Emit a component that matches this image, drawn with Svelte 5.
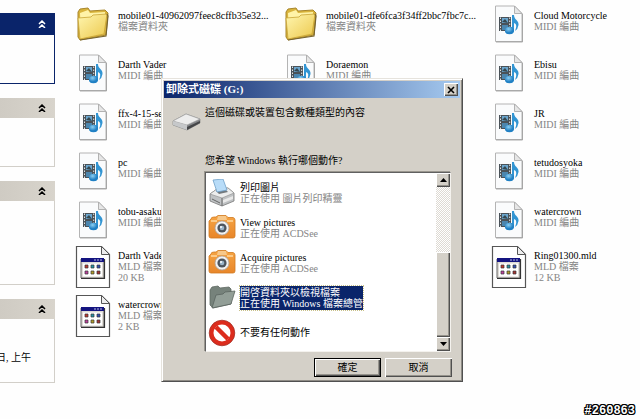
<script>
  const midi = (name) => ({ name, kind: 'midi', lines: ['MIDI 編曲'] });
  const mld = (name, size) => ({ name, kind: 'mld', lines: ['MLD 檔案', size] });
  const folder = (name) => ({ name, kind: 'folder', lines: ['檔案資料夾'] });

  const columns = [
    [
      folder('mobile01-40962097feec8cffb35e32...'),
      midi('Darth Vader'),
      midi('ffx-4-15-se'),
      midi('pc'),
      midi('tobu-asaku'),
      mld('Darth Vade', '20 KB'),
      mld('watercrown', '2 KB'),
    ],
    [folder('mobile01-dfe6fca3f34ff2bbc7fbc7c...'), midi('Doraemon')],
    [
      midi('Cloud Motorcycle'),
      midi('Ebisu'),
      midi('JR'),
      midi('tetudosyoka'),
      midi('watercrown'),
      mld('Ring01300.mld', '12 KB'),
    ],
  ];

  const panels = [
    { size: 'short', active: true, note: '' },
    { size: 'short', active: false, note: '' },
    { size: 'tall', active: false, note: '' },
    { size: 'mid', active: false, note: '日, 上午' },
  ];

  const actions = [
    { icon: 'printer', title: '列印圖片', via: '正在使用 圖片列印精靈' },
    { icon: 'camera', title: 'View pictures', via: '正在使用 ACDSee' },
    { icon: 'camera', title: 'Acquire pictures', via: '正在使用 ACDSee' },
    { icon: 'open', title: '開啓資料夾以檢視檔案', via: '正在使用 Windows 檔案總管' },
    { icon: 'none', title: '不要有任何動作', via: '' },
  ];

  let selected = $state(3);
</script>

{#snippet fileIcon(kind)}
  {#if kind === 'folder'}
    <svg width="34" height="34" viewBox="0 0 34 34">
      <path d="M2 5 L4 2 L12 1 L14 4 L29 3 L32 6 L30 28 L4 33 L2 30Z" fill="#d9b43c" stroke="#a8862c" />
      <path d="M4 6 L12 3 L14 6 L29 5 L28 27 L5 31Z" fill="#fff3a8" />
      <path d="M2 11 L15 10 L17 8 L31 7 L28 27 L4 32Z" fill="url(#gFolder)" stroke="#c9a436" stroke-width=".8" />
      <path d="M31 7 L32 9 L30 29 L4 33" fill="none" stroke="#77642f" stroke-width="1.2" />
    </svg>
  {:else if kind === 'midi'}
    <svg width="30" height="38" viewBox="0 0 30 38">
      <path d="M1.500 1 H20.500 L28 8.500 V36.500 H1.500Z" fill="#fafbfc" stroke="#b4b4b4" />
      <path d="M28.500 9 V37 H2" fill="none" stroke="#999" stroke-width=".8" />
      <path d="M20.500 1 V8.500 H28Z" fill="#e6e6e6" stroke="#aaa" stroke-width=".9" />
      <path d="M5 12 H17 V26 H5Z" fill="#4a5258" />
      <path d="M8 13 H14 V18 H8Z" fill="#6aa5cd" />
      <path d="M8 20 H14 V25 H8Z" fill="#4c86ae" />
      <path d="M8 17 L11 14 L14 18Z" fill="#34474f" />
      <path d="M6.500 12.500 V26 M15.700 12.500 V26" stroke="#dfe5e8" stroke-dasharray="1.500 1.500" />
      <path d="M18 10 H20 C20 15 25 15 24.500 20 Q24 24 21 26 Q24 19 20 18 V25 Q20 29 15.500 29 Q11 29 11 25.500 Q12 22 18 22Z" fill="#3295d3" />
      <ellipse cx="15.500" cy="25.500" rx="4.500" ry="3.700" fill="url(#gNote)" />
    </svg>
  {:else}
    <svg width="36" height="44" viewBox="0 0 36 44">
      <path d="M1.500 1.500 H26.500 L34.500 9.500 V42.500 H1.500Z" fill="#fff" stroke="#565656" stroke-width="1.200" />
      <path d="M26.500 1.500 V9.500 H34.500Z" fill="#eee" stroke="#565656" />
      <path d="M6 14 H29 V33 H6Z" fill="#dedbd5" stroke="#666" />
      <path d="M29.500 14 V33.500 H6" fill="none" stroke="#333" stroke-width="1.200" />
      <path d="M6 13 H29 V17 H6Z" fill="#141480" />
      <path d="M19 15 h2 m1 0 h2 m1 0 h2" stroke="#b9bce4" />
      <path d="M8 18.500 H27 V31.500 H8Z" fill="#fff" />
      <g stroke="#333" stroke-width=".7">
        <path d="M10 20 h3 v3 h-3z" fill="#c03a30" />
        <path d="M16 20 h3 v3 h-3z" fill="#2694a5" />
        <path d="M22 20 h3 v3 h-3z" fill="#3350b6" />
        <path d="M10 26 h3 v3 h-3z" fill="#c142a0" />
        <path d="M16 26 h3 v3 h-3z" fill="#b4a028" />
        <path d="M22 26 h3 v3 h-3z" fill="#a83434" />
      </g>
    </svg>
  {/if}
{/snippet}

{#snippet actionIcon(kind)}
  <svg width="28" height="28" viewBox="0 0 28 28">
    {#if kind === 'printer'}
      <path d="M2 15 L9 10 L20 9 L26 14 V22 L14 27 L2 22Z" fill="#bfc2c4" stroke="#777" stroke-width=".8" />
      <path d="M2 15 L9 10 L20 9 L26 14 L14 19Z" fill="#eceded" stroke="#8c8c8c" stroke-width=".6" />
      <path d="M8 12 L18 11 L20 13 L11 15Z" fill="#72797d" />
      <path d="M5 1 L15 0 L19 11 L9 13Z" fill="#b8dcf8" stroke="#6f9fc8" stroke-width=".8" />
      <path d="M14 19 V27 M4 20 L12 24" stroke="#666" fill="none" />
      <path d="M15 21 L25 17 V20 L15 24Z" fill="#e9e9e9" />
    {:else if kind === 'camera'}
      <path d="M3 5 Q3 3 6 3 H8 L10 1.500 H18 L20 3.500 H25 Q27 4 27 6 V22 Q27 24 25 24 H3 Q1 24 1 22 V7Z" fill="url(#gCam)" stroke="#d07a20" stroke-width=".8" />
      <path d="M10 2 H18 L19 6 H9Z" fill="#f7c88a" />
      <path d="M3 7 H9 M19 7 H25" stroke="#ffd9a0" stroke-width="1.500" />
      <circle cx="14" cy="14" r="7" fill="#f2f2f2" stroke="#a9a19b" stroke-width=".8" />
      <circle cx="14" cy="14" r="4.600" fill="#4d545c" />
      <circle cx="14" cy="14" r="2.300" fill="#9bb4c8" />
      <circle cx="13" cy="13" r="1" fill="#fff" />
    {:else if kind === 'open'}
      <path d="M2 6 L4 3 L10 2 L12 4 L21 3 L23 5 V20 L5 24 L2 21Z" fill="#76827b" stroke="#5f6a63" stroke-width=".8" />
      <path d="M4 24 L8 11 L15 10 L17 8 L27 7 L23 20Z" fill="#929e97" stroke="#5b655f" stroke-width=".8" />
    {:else}
      <circle cx="14" cy="14" r="12.800" fill="#dc2c1d" stroke="#9c2a20" stroke-width=".7" />
      <circle cx="14" cy="14" r="8.500" fill="#fff" />
      <path d="M8 8 L20 20" stroke="#dc2c1d" stroke-width="4.500" />
    {/if}
  </svg>
{/snippet}

<svg class="defs" width="0" height="0" aria-hidden="true">
  <defs>
    <linearGradient id="gFolder" x1="0" y1="0" x2="1" y2="1">
      <stop offset="0" stop-color="#fff6b0" /><stop offset="1" stop-color="#ecc84c" />
    </linearGradient>
    <radialGradient id="gNote" cx=".4" cy=".3">
      <stop offset="0" stop-color="#8fd0f2" /><stop offset="1" stop-color="#2080c4" />
    </radialGradient>
    <linearGradient id="gCam" x1="0" y1="0" x2="0" y2="1">
      <stop offset="0" stop-color="#f6a544" /><stop offset="1" stop-color="#e8862a" />
    </linearGradient>
  </defs>
</svg>

<div class="explorer">
  <aside>
    {#each panels as p}
      <section class="panel {p.size}" class:active={p.active}>
        <button class="head" aria-label="collapse">
          <svg width="8" height="8" viewBox="0 0 8 8">
            <path d="M1 4 L4 1 L7 4 M1 8 L4 5 L7 8" fill="none" stroke="currentColor" stroke-width="1.500" />
          </svg>
        </button>
        <div class="body">{#if p.note}<p>{p.note}</p>{/if}</div>
      </section>
    {/each}
  </aside>

  <main>
    {#each columns as files}
      <ul>
        {#each files as f}
          <li>
            <span class="pic {f.kind}">{@render fileIcon(f.kind)}</span>
            <div class="label">
              <strong>{f.name}</strong>
              {#each f.lines as line}<span>{line}</span>{/each}
            </div>
          </li>
        {/each}
      </ul>
    {/each}
  </main>

  <div class="dialog" role="dialog" aria-labelledby="title">
    <header>
      <h1 id="title">卸除式磁碟 (G:)</h1>
      <button class="close" aria-label="close">
        <svg width="8" height="8" viewBox="0 0 8 8"><path d="M1 1 L7 7 M7 1 L1 7" stroke="#000" stroke-width="1.600" /></svg>
      </button>
    </header>

    <div class="content">
      <svg class="drive" width="30" height="20" viewBox="0 0 30 20">
        <path d="M1 9 L14 2 L28 7 V11 L15 18 L1 13Z" fill="#85878a" stroke="#77797b" stroke-width=".6" />
        <path d="M1 9 L14 2 L28 7 L15 13Z" fill="#ededed" stroke="#a5a5a5" stroke-width=".6" />
        <path d="M1 9 L15 13 V18 L1 13Z" fill="#c6c8ca" />
        <path d="M15 15 L28 9 V11 L15 18Z" fill="#454648" />
      </svg>
      <div class="right">
        <p class="intro">這個磁碟或裝置包含數種類型的內容</p>
        <p class="ask" id="ask">您希望 Windows 執行哪個動作?</p>
        <div class="list">
          <div class="options" role="listbox" aria-labelledby="ask">
            {#each actions as a, i}
              <button role="option" aria-selected={selected === i} onclick={() => (selected = i)}>
                {@render actionIcon(a.icon)}
                <span class="text">
                  <span class="name">{a.title}</span>
                  {#if a.via}<span class="via">{a.via}</span>{/if}
                </span>
              </button>
            {/each}
          </div>
          <div class="scroll">
            <button aria-label="up"><svg width="7" height="4" viewBox="0 0 7 4"><path d="M0 4 L3.500 0 L7 4Z" /></svg></button>
            <div class="thumb"></div>
            <button aria-label="down"><svg width="7" height="4" viewBox="0 0 7 4"><path d="M0 0 L3.500 4 L7 0Z" /></svg></button>
          </div>
        </div>
      </div>
    </div>

    <footer>
      <button class="cmd default">確定</button>
      <button class="cmd">取消</button>
    </footer>
  </div>

  <div class="mark">#260863</div>
</div>

<style>
  :global(body) {
    margin: 0;
    background: #fefefe;
  }
  .defs {
    position: absolute;
  }
  .explorer {
    position: relative;
    display: flex;
    min-height: 100vh;
    overflow: hidden;
    font: 10px/11px 'Liberation Serif', 'Noto Sans CJK TC', serif;
    color: #000;
  }
  button {
    font: inherit;
    color: inherit;
    padding: 0;
    border: 0;
    background: none;
  }
  p, h1, ul {
    margin: 0;
    padding: 0;
  }
  svg {
    display: block;
    flex: none;
  }

  aside {
    flex: 0 0 55px;
    display: flex;
    flex-direction: column;
    gap: 14px;
    padding-top: 13px;
  }
  .panel .head {
    display: flex;
    align-items: center;
    justify-content: flex-end;
    width: 100%;
    height: 20px;
    padding-right: 9px;
    background: linear-gradient(90deg, #cfcbc3, #d8d4cc);
  }
  .panel .body {
    height: 48px;
    border: 1px solid #d2cfc9;
    border-width: 0 1px 1px 0;
    overflow: hidden;
  }
  .panel.tall .body {
    height: 83px;
  }
  .panel.mid .body {
    height: 63px;
  }
  .panel.active .head {
    height: 22px;
    background: #0a246a;
    color: #fff;
  }
  .panel.active .body {
    border-color: #0a246a;
  }
  .panel p {
    margin: 33px 0 0 -4px;
    white-space: nowrap;
  }

  main {
    flex: 1;
    display: flex;
    padding-left: 20px;
  }
  ul {
    flex: 0 0 208px;
    list-style: none;
  }
  li {
    display: flex;
    align-items: center;
    gap: 7px;
    height: 44px;
    margin-bottom: 5px;
  }
  .pic {
    display: flex;
    justify-content: center;
    width: 36px;
  }
  .pic.midi, .pic.folder {
    padding-top: 4px;
  }
  .label {
    display: flex;
    flex-direction: column;
    padding-bottom: 2px;
    white-space: nowrap;
  }
  .label strong {
    font-weight: 400;
  }
  .label span {
    color: #858585;
  }

  .dialog {
    position: absolute;
    left: 161px;
    top: 78px;
    box-sizing: border-box;
    width: 302px;
    padding: 2px;
    background: #d4d0c8;
    border: 1px solid;
    border-color: #e6e3dd #505050 #505050 #e6e3dd;
    box-shadow: inset 1px 1px #fff, inset -1px -1px #8e8b85;
  }
  header {
    display: flex;
    align-items: center;
    justify-content: space-between;
    height: 17px;
    padding: 0 2px;
    background: linear-gradient(90deg, #0a246a, #a6caf0);
  }
  h1 {
    font: 700 11px/17px 'Liberation Serif', 'Noto Sans CJK TC', serif;
    color: #fff;
  }
  .close {
    display: grid;
    place-items: center;
    width: 14px;
    height: 13px;
  }
  .close, .scroll button, .thumb, .cmd {
    background: #d4d0c8;
    box-shadow: inset 1px 1px #fff, inset -1px -1px #505050, inset -2px -2px #96938c;
  }
  .content {
    display: flex;
    gap: 3px;
    padding: 9px 9px 0 8px;
  }
  .drive {
    margin-top: 5px;
  }
  .right {
    flex: 1;
  }
  .intro {
    margin-bottom: 36px;
  }
  .list {
    display: flex;
    height: 178px;
    background: #fff;
    border: 1px solid;
    border-color: #606060 #f4f2ee #f4f2ee #606060;
    box-shadow: -1px -1px #9a978f;
  }
  .ask {
    margin-bottom: 5px;
  }
  .intro, .ask {
    line-height: 12px;
  }
  .options {
    flex: 1;
    min-width: 0;
    padding: 2px;
  }
  .options button {
    display: flex;
    align-items: center;
    gap: 4px;
    width: 100%;
    height: 35px;
    text-align: left;
    white-space: nowrap;
  }
  .text {
    display: flex;
    flex-direction: column;
    padding: 1px 0;
  }
  .via {
    color: #858585;
  }
  [aria-selected='true'] .text {
    background: #0a246a;
    outline: 1px dotted #c8c088;
    color: #fff;
  }
  [aria-selected='true'] .via {
    color: #fff;
  }
  .scroll {
    display: flex;
    flex-direction: column;
    width: 14px;
    background: repeating-conic-gradient(#fff 0 25%, #dedad3 0 50%) 0 0 / 2px 2px;
  }
  .scroll button {
    display: grid;
    place-items: center;
    height: 14px;
  }
  .thumb {
    height: 85px;
    margin-top: auto;
  }
  footer {
    display: flex;
    justify-content: flex-end;
    gap: 4px;
    padding: 6px 8px 2px;
  }
  .cmd {
    width: 67px;
    height: 19px;
  }
  .cmd.default {
    border: 1px solid #000;
  }
  .mark {
    position: absolute;
    right: 5px;
    bottom: 2px;
    font: 700 12px/12px 'Liberation Mono', monospace;
    color: #fff;
    text-shadow: 1px 0 #000, -1px 0 #000, 0 1px #000, 0 -1px #000, 1px 1px #000, -1px -1px #000, 1px -1px #000, -1px 1px #000;
  }
</style>
